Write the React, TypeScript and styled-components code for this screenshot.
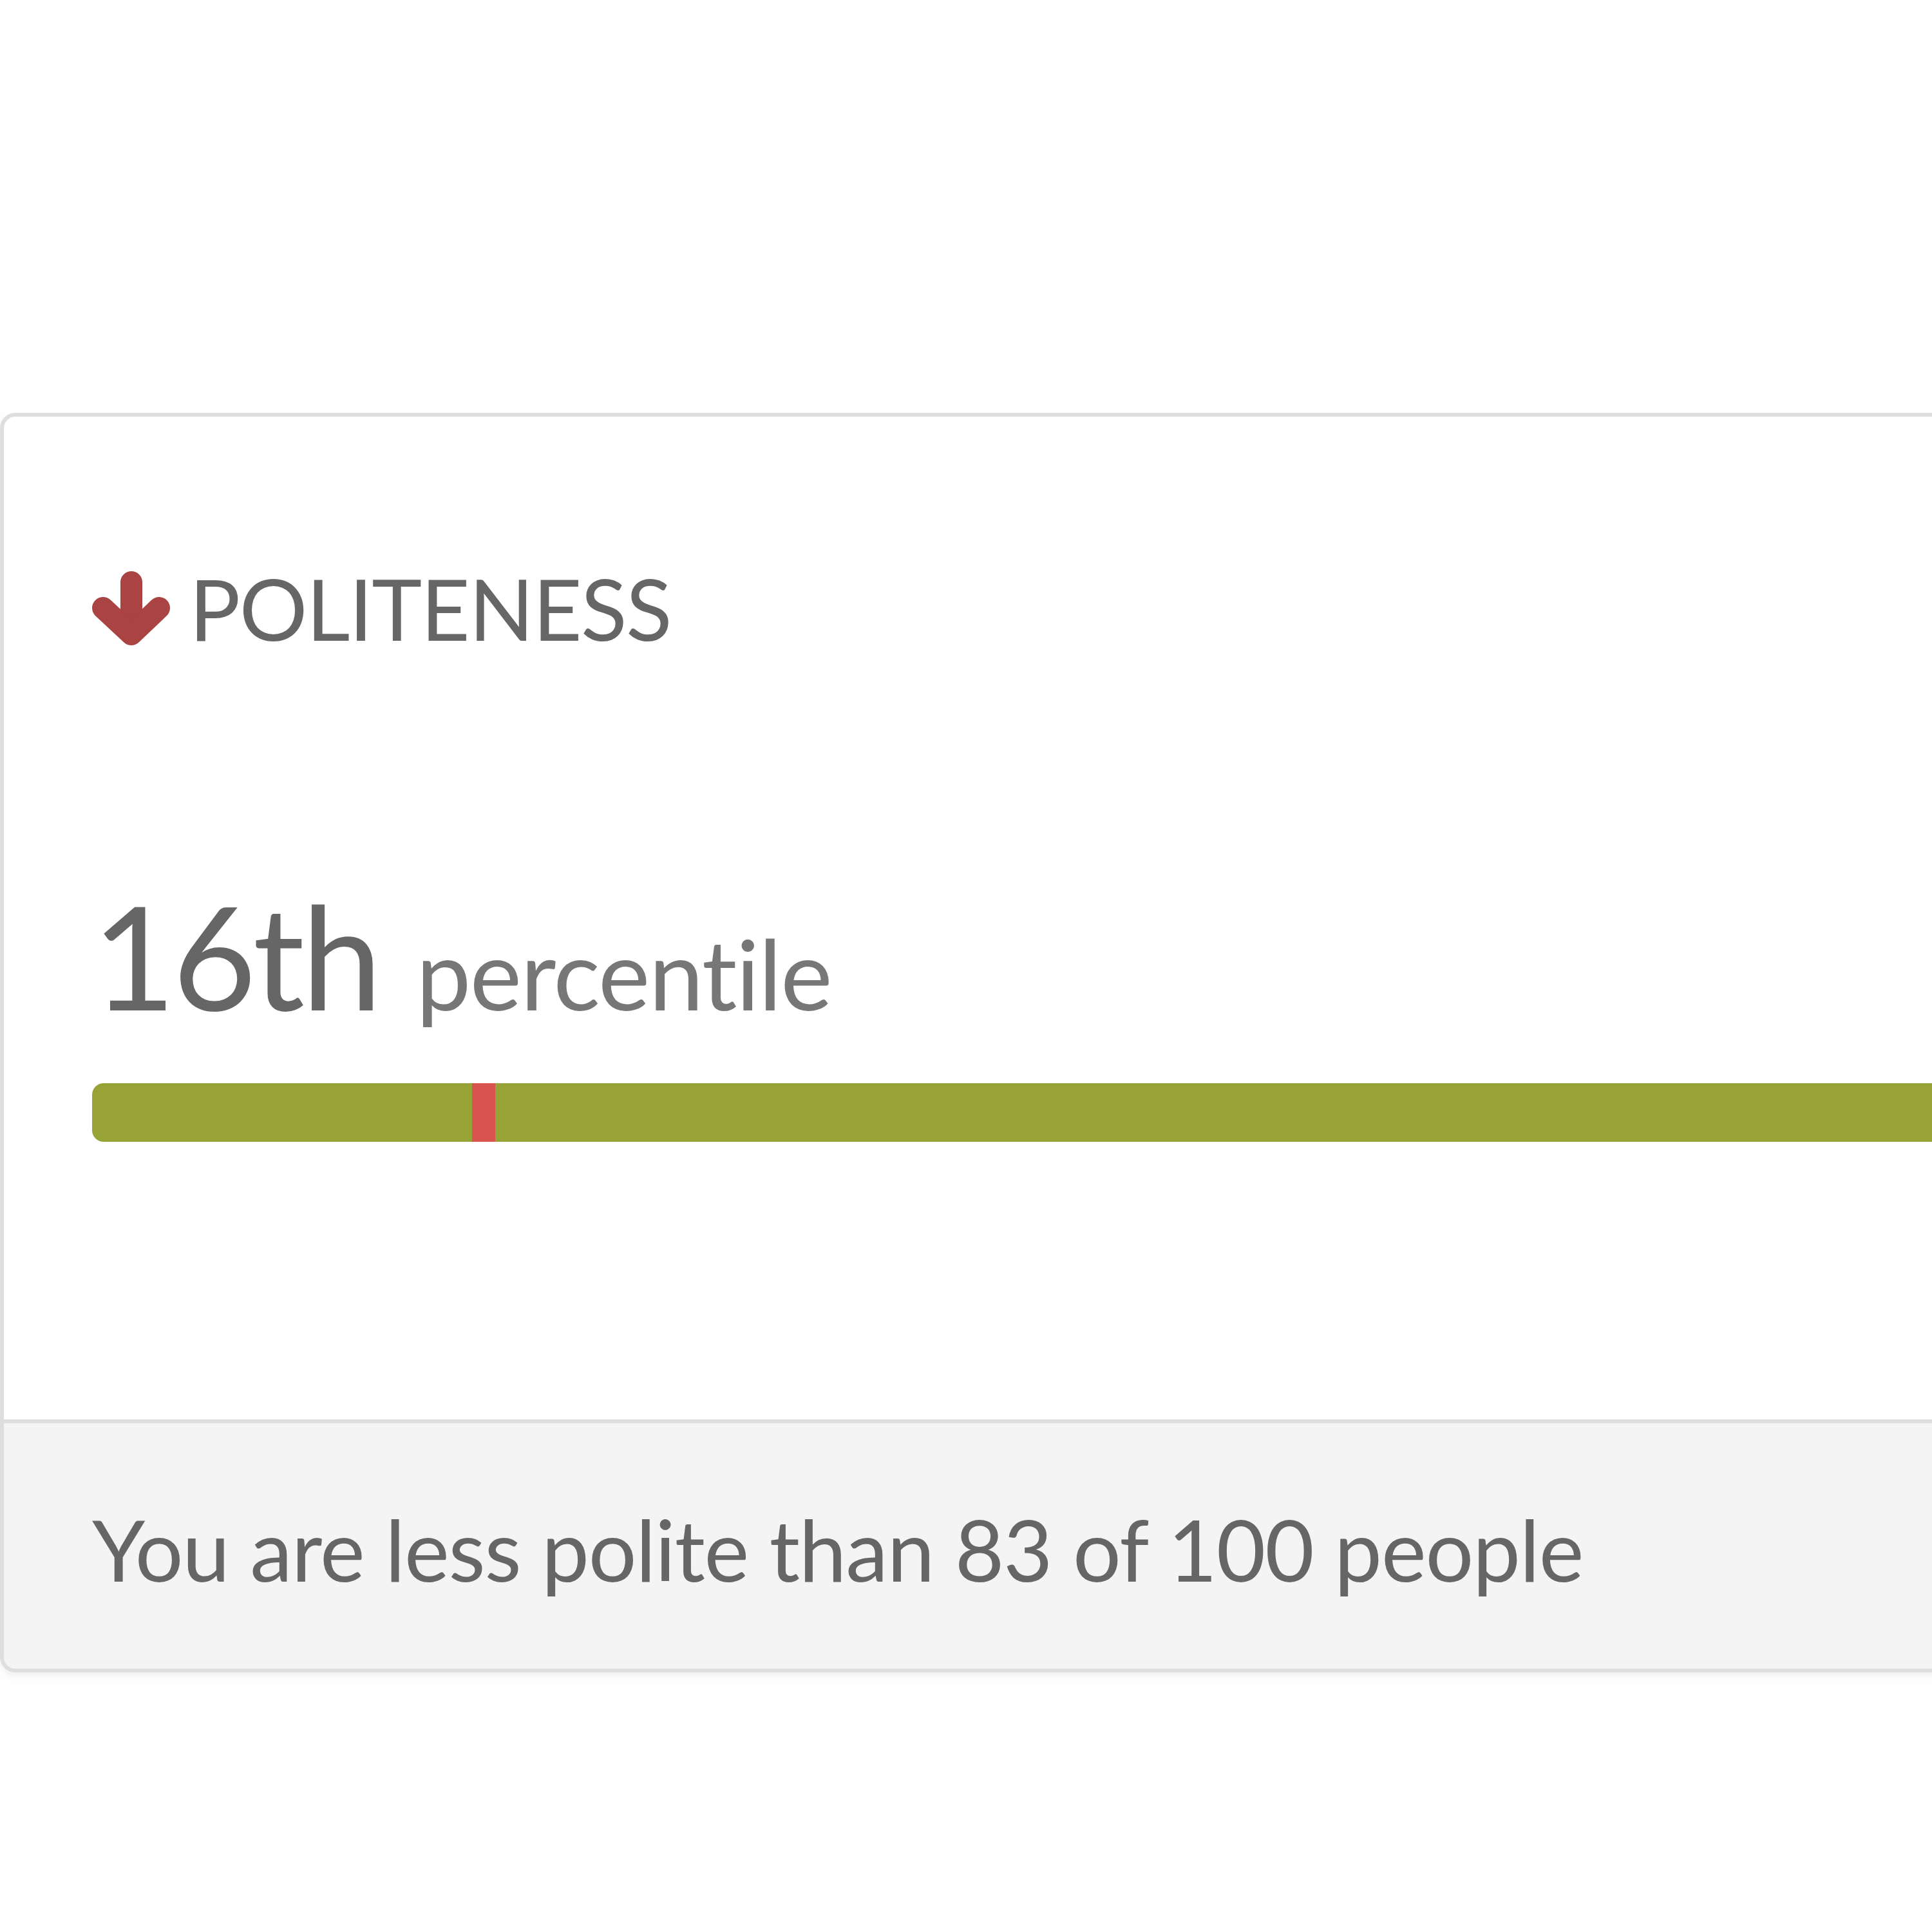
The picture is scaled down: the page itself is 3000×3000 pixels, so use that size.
import React from 'react';
import styled, { createGlobalStyle } from 'styled-components';

const GlobalStyle = createGlobalStyle`
  body {
    margin: 0;
    background: #fefefe;
    overflow: hidden;
    font-family: Lato, "Open Sans", "Liberation Sans", sans-serif;
  }
`;

const Page = styled.div`
  padding-top: 641px;
  width: 3000px;
  height: 3000px;
  box-sizing: border-box;
  overflow: hidden;
`;

const Card = styled.div`
  width: 3960px;
  border: 6px solid #dedede;
  border-radius: 24px;
  background: #fff;
  overflow: hidden;
  box-shadow: 0 6px 8px rgba(0, 0, 0, 0.05);
`;

const CardBody = styled.div`
  padding: 231px 137px 431px;
`;

const Heading = styled.div`
  display: flex;
  align-items: center;
  gap: 30px;
  font-size: 132px;
  line-height: 1;
  color: #666;
  letter-spacing: -1.6px;
`;

const ArrowIcon = styled.svg`
  width: 121px;
  height: 115px;
  flex: none;
`;

const Score = styled.div`
  margin-top: 361px;
  font-size: 224px;
  line-height: 1;
  color: #666;
  letter-spacing: -5px;
`;

const Unit = styled.span`
  margin-left: 58px;
  font-size: 152px;
  line-height: 1;
  color: #777;
  letter-spacing: -1.5px;
`;

const Track = styled.div`
  position: relative;
  margin-top: 87px;
  height: 91px;
  border-radius: 18px;
  background: #97a336;
`;

const Marker = styled.div`
  position: absolute;
  top: 0;
  bottom: 0;
  width: 36px;
  background: #d9534f;
`;

const Footer = styled.div`
  border-top: 6px solid #dedede;
  background: #f4f4f4;
  padding: 129px 137px 120px;
  font-size: 132px;
  line-height: 1;
  color: #666;
  letter-spacing: -1.2px;
`;

// chunky down arrow: stem plus a rounded chevron
const DownArrow = () => (
  <ArrowIcon viewBox="0 0 121 115">
    <g fill="none" stroke="#a94442" strokeWidth="34" strokeLinecap="round" strokeLinejoin="round">
      <path d="M61 17 V90" />
      <path d="M17 57 L61 98 L104 57" />
    </g>
  </ArrowIcon>
);

const trait = {
  name: 'POLITENESS',
  percentile: 16,
  less: 83,
};

const App = () => (
  <Page>
    <GlobalStyle />
    <Card>
      <CardBody>
        <Heading>
          <DownArrow />
          {trait.name}
        </Heading>
        <Score>
          {trait.percentile}th
          <Unit>percentile</Unit>
        </Score>
        <Track>
          <Marker style={{ left: `${trait.percentile}%` }} />
        </Track>
      </CardBody>
      <Footer>You are less polite than {trait.less} of 100 people</Footer>
    </Card>
  </Page>
);

export default App;
